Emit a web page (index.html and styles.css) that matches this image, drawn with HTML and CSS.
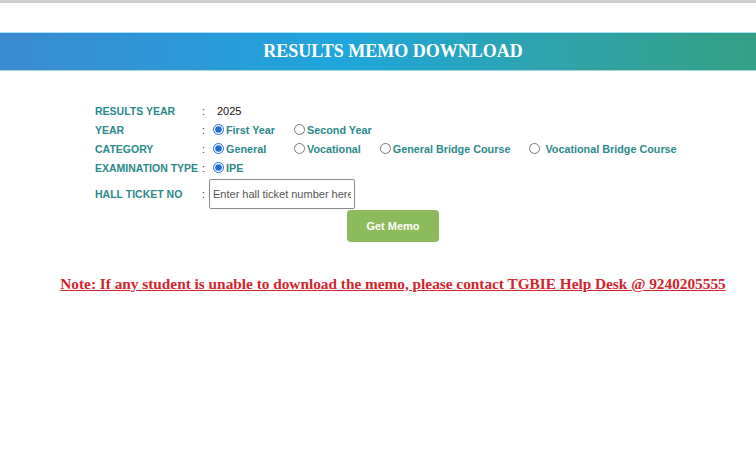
FILE: index.html
```html
<!DOCTYPE html>
<html lang="en">
<head>
    <meta charset="UTF-8">
    <meta name="viewport" content="width=device-width, initial-scale=1.0">
    <title>Results Memo Download</title>
    <link rel="stylesheet" href="styles.css">
</head>
<body>
    <div class="topline"></div>
    <div class="header">
        <h1>RESULTS MEMO DOWNLOAD</h1>
    </div>

    <div class="content">
        <form class="memo-form" onsubmit="return false;">
            <div class="row">
                <span class="label">RESULTS YEAR</span>
                <span class="colon">:</span>
                <span class="value year-text">2025</span>
            </div>
            <div class="row">
                <span class="label">YEAR</span>
                <span class="colon">:</span>
                <span class="value options">
                    <label class="opt first"><input type="radio" name="year" checked> First Year</label>
                    <label class="opt"><input type="radio" name="year"> Second Year</label>
                </span>
            </div>
            <div class="row">
                <span class="label">CATEGORY</span>
                <span class="colon">:</span>
                <span class="value options">
                    <label class="opt first"><input type="radio" name="cat" checked> General</label>
                    <label class="opt"><input type="radio" name="cat"> Vocational</label>
                    <label class="opt"><input type="radio" name="cat"> General Bridge Course</label>
                    <label class="opt"><input type="radio" name="cat"> &nbsp;Vocational Bridge Course</label>
                </span>
            </div>
            <div class="row">
                <span class="label">EXAMINATION TYPE</span>
                <span class="colon">:</span>
                <span class="value options">
                    <label class="opt"><input type="radio" name="exam" checked> IPE</label>
                </span>
            </div>
            <div class="row ticket-row">
                <span class="label">HALL TICKET NO</span>
                <span class="colon">:</span>
                <span class="value"><input type="text" class="ticket" placeholder="Enter hall ticket number here"></span>
            </div>
            <div class="actions">
                <button type="submit" class="get-btn">Get Memo</button>
            </div>
        </form>

        <p class="note">Note: If any student is unable to download the memo, please contact TGBIE Help Desk @ 9240205555</p>
    </div>
</body>
</html>
```

FILE: styles.css
```css
body {
    margin: 0;
    font-family: "Liberation Sans", Arial, sans-serif;
    background: #ffffff;
    color: #000;
}

.topline {
    height: 3px;
    background: #cfcfcf;
}

.header {
    margin-top: 29px;
    height: 37px;
    border-top: 1px solid #a9dff2;
    border-bottom: 1px solid #9fd7d8;
    background: linear-gradient(to right, #3c8ad0 0%, #1fa6dc 45%, #2fa3a8 75%, #35a086 100%);
    display: flex;
    align-items: center;
    justify-content: center;
    padding-left: 30px;
}

.header h1 {
    margin: 0;
    color: #ffffff;
    font-family: "Liberation Serif", "Times New Roman", serif;
    font-weight: bold;
    font-size: 18px;
}

.content {
    padding-left: 30px;
}

.memo-form {
    margin-top: 30px;
}

.row {
    display: grid;
    grid-template-columns: 105px 8px auto;
    align-items: center;
    height: 19px;
    padding-left: 65px;
    font-size: 10.5px;
    font-weight: bold;
}

.label {
    color: #2a8a8a;
    white-space: nowrap;
}

.colon {
    color: #333;
    font-weight: normal;
    padding-left: 2px;
}

.value {
    color: #2a8a8a;
}

.year-text {
    color: #111;
    font-weight: normal;
    padding-left: 9px;
    font-size: 11px;
}

.options {
    display: flex;
    gap: 19px;
    padding-left: 5px;
    font-size: 10.8px;
}

.opt {
    display: inline-flex;
    align-items: center;
    white-space: nowrap;
}

.opt.first {
    min-width: 62px;
}

.opt input {
    margin: 0 2px 0 0;
    width: 11px;
    height: 11px;
    accent-color: #1f6fd6;
}

.ticket-row {
    height: 29px;
    margin-top: 2px;
}

.ticket {
    box-sizing: border-box;
    width: 146px;
    height: 30px;
    margin-left: 1px;
    padding: 0 3px;
    border: 1px solid #8a8a8a;
    border-radius: 2px;
    font-family: "Liberation Sans", Arial, sans-serif;
    font-size: 11px;
}

.ticket::placeholder {
    color: #555;
}

.actions {
    display: flex;
    justify-content: center;
    margin-top: 2px;
}

.get-btn {
    width: 92px;
    height: 32px;
    border: none;
    border-radius: 4px;
    background: #8dba5a;
    color: #ffffff;
    font-family: "Liberation Sans", Arial, sans-serif;
    font-size: 11px;
    font-weight: bold;
    cursor: pointer;
}

.note {
    margin: 33px 0 0;
    text-align: center;
    color: #d3242c;
    font-family: "Liberation Serif", "Times New Roman", serif;
    font-weight: bold;
    font-size: 15.3px;
    text-decoration: underline;
}
```
